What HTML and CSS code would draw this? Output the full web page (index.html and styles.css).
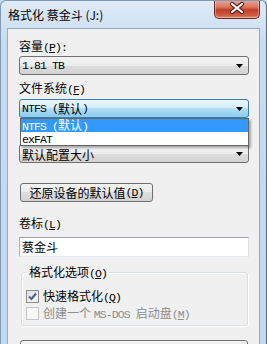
FILE: index.html
```html
<!DOCTYPE html>
<html lang="zh-CN">
<head>
<meta charset="utf-8">
<link rel="stylesheet" href="styles.css">
</head>
<body>
<div class="window">
  <div class="titlebar">
    <span class="title">格式化 蔡金斗 (J:)</span>
    <div class="close">
      <svg width="46" height="19" viewBox="0 0 46 19">
        <path d="M18 5 L28 13 M28 5 L18 13" stroke="#5a1e12" stroke-width="4.2" stroke-linecap="round"/>
        <path d="M18 5 L28 13 M28 5 L18 13" stroke="#ffffff" stroke-width="2.2" stroke-linecap="round"/>
      </svg>
    </div>
  </div>
  <div class="client">
    <div class="label">容量<span class="lat">(<u>P</u>):</span></div>
    <div class="combo"><span class="lat">1.81 TB</span><svg class="arrow" width="7" height="4" viewBox="0 0 7 4"><path d="M0 0 H7 L3.5 4 Z" fill="#000"/></svg></div>
    <div class="label l2">文件系统<span class="lat">(<u>F</u>)</span></div>
    <div class="combo focus"><span class="lat">NTFS (</span>默认<span class="lat">)</span><svg class="arrow" width="7" height="4" viewBox="0 0 7 4"><path d="M0 0 H7 L3.5 4 Z" fill="#000"/></svg></div>
    <div class="label l3"></div>
    <div class="combo c3"><span class="c3text">默认配置大小</span><svg class="arrow" width="7" height="4" viewBox="0 0 7 4"><path d="M0 0 H7 L3.5 4 Z" fill="#000"/></svg></div>
    <div class="button restore">还原设备的默认值<span class="lat"> (<u>D</u>)</span></div>
    <div class="label l4">卷标<span class="lat">(<u>L</u>)</span></div>
    <div class="textbox">蔡金斗</div>
    <div class="group">
      <span class="legend">格式化选项<span class="lat">(<u>O</u>)</span></span>
      <div class="check first">
        <span class="box checked"><svg width="11" height="11" viewBox="0 0 11 11"><path d="M2 5.5 L4.5 8 L9 2.5" fill="none" stroke="#4a5f97" stroke-width="2"/></svg></span>
        <span>快速格式化<span class="lat">(<u>Q</u>)</span></span>
      </div>
      <div class="check disabled">
        <span class="box"></span>
        <span>创建一个 <span class="lat">MS-DOS </span>启动盘<span class="lat">(<u>M</u>)</span></span>
      </div>
    </div>
    <div class="button bottom"></div>
    <div class="dropdown">
      <div class="item sel"><span class="lat">NTFS (</span>默认<span class="lat">)</span></div>
      <div class="item"><span class="lat">exFAT</span></div>
    </div>
  </div>
</div>
</body>
</html>
```
FILE: styles.css
```css
* { box-sizing: border-box; }
html, body { margin: 0; padding: 0; }
body {
  width: 267px;
  height: 344px;
  overflow: hidden;
  font-family: "Noto Sans CJK SC", sans-serif;
  font-size: 12px;
  color: #000;
  background: #c9dcf0;
}
.lat {
  font-family: "Liberation Mono", monospace;
  font-size: 11.5px;
  letter-spacing: -0.9px;
}
u { text-underline-offset: 1px; }
.window {
  height: 344px;
  display: flex;
  flex-direction: column;
  background: linear-gradient(#dfebf8, #c8dcf0 40px, #c2d8ee);
  border-left: 1px solid #8199b4;
  border-right: 1px solid #4e6a88;
  border-top: 1px solid #8199b4;
  border-top-left-radius: 6px;
  border-top-right-radius: 6px;
  overflow: hidden;
}
.titlebar {
  height: 27px;
  flex: none;
  display: flex;
  align-items: flex-start;
  padding-left: 7px;
}
.title {
  padding-top: 6px;
  line-height: 16px;
  color: #000;
}
.close {
  margin-left: auto;
  margin-right: 6px;
  margin-top: -1px;
  width: 46px;
  height: 19px;
  border: 1px solid #6b2a1e;
  border-top: none;
  border-radius: 0 0 5px 5px;
  background: linear-gradient(#e9a99a, #d9735e 40%, #c23d26 55%, #d05b42 85%, #e08a6e);
  box-shadow: inset 0 0 0 1px rgba(255,255,255,0.35);
}
.close svg { display: block; margin-top: -1px; margin-left: -1px; }
.client {
  flex: 1;
  position: relative;
  margin: 0 6px;
  background: #f0f0f0;
  border: 1px solid #97abc1;
  border-bottom: none;
  padding: 9px 10px 0 11px;
  overflow: hidden;
}
.label {
  line-height: 16px;
  height: 16px;
}
.l2 { margin-top: 5px; }
.l3 { margin-top: 6px; }
.l4 { margin-top: 13px; }
.combo {
  height: 19px;
  margin-top: 2px;
  border: 1px solid #707070;
  border-radius: 3px;
  background: linear-gradient(#f3f3f3, #ececec 50%, #dedede 50%, #d2d2d2);
  display: flex;
  align-items: center;
  padding-left: 2px;
  line-height: 16px;
  white-space: nowrap;
}
.combo.focus {
  margin-top: 3px;
  border-color: #3c7fb1;
  background: linear-gradient(#e8f5fc, #d6eefb 50%, #b2def6 50%, #8ccbed);
}
.combo.c3 { margin-top: 4px; }
.c3text { line-height: 12px; padding-top: 3px; }
.arrow { margin-left: auto; margin-right: 5px; flex: none; }
.button {
  height: 19px;
  border: 1px solid #707070;
  border-radius: 3px;
  background: linear-gradient(#f3f3f3, #ececec 50%, #dedede 50%, #d2d2d2);
  display: flex;
  align-items: center;
  justify-content: center;
  line-height: 16px;
  white-space: nowrap;
}
.restore {
  width: 133px;
  margin: 20px 0 0 1px;
}
.textbox {
  height: 20px;
  margin-top: 6px;
  background: #fff;
  border: 1px solid #abadb3;
  border-top-color: #a0a3aa;
  border-right-color: #dbdfe6;
  border-bottom-color: #e3e9ef;
  padding-left: 2px;
  line-height: 18px;
}
.group {
  margin: 15px 1px 0 2px;
  border: 1px solid #d5dfe5;
  border-radius: 3px;
  box-shadow: inset 1px 1px 0 #fff, 1px 1px 0 #fff;
  padding: 0 4px 3px 4px;
}
.legend {
  display: block;
  width: fit-content;
  margin: -9px 0 0 1px;
  padding: 0 2px;
  background: #f0f0f0;
  line-height: 16px;
}
.check {
  display: flex;
  align-items: center;
  gap: 4px;
  height: 17px;
  line-height: 16px;
  white-space: nowrap;
}
.check.first { margin-top: 6px; }
.box {
  width: 13px;
  height: 13px;
  flex: none;
  border: 1px solid #8e8f8f;
  background: linear-gradient(135deg, #dcdcdc, #fdfdfd);
  display: flex;
  align-items: center;
  justify-content: center;
}
.disabled { color: #8d8d8d; }
.disabled .box {
  border-color: #c5c5c5;
  background: #f7f7f7;
}
.bottom {
  width: 228px;
  height: 24px;
  margin: 14px 0 0 1px;
}
.dropdown {
  position: absolute;
  left: 12px;
  top: 89px;
  width: 229px;
  border: 1px solid #646464;
  background: #fff;
  box-shadow: 2px 2px 2px rgba(0,0,0,0.3);
}
.item {
  height: 13px;
  line-height: 12px;
  padding-left: 1px;
  white-space: nowrap;
}
.item.sel {
  background: #3399ff;
  color: #fff;
}
```
